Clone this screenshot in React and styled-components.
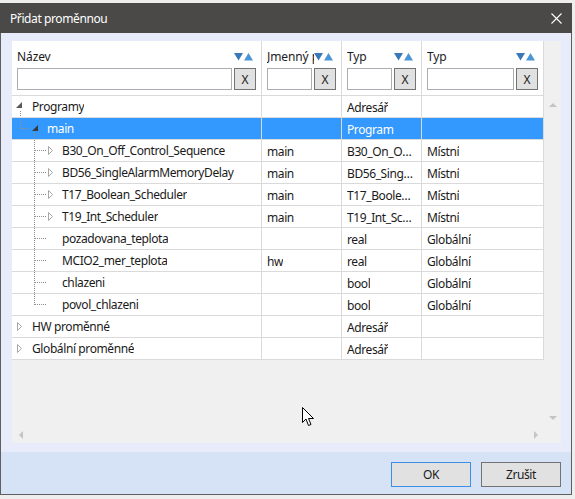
import React from 'react'
import styled, { createGlobalStyle } from 'styled-components'

const GlobalStyle = createGlobalStyle`
    html, body {
        margin: 0;
        padding: 0;
        background: #eeeeee;
    }
    body {
        font-family: 'Noto Sans', 'Open Sans', sans-serif;
        font-size: 12px;
        letter-spacing: -0.4px;
        color: #1a1a1a;
    }
`

const columns = [
    { key: 'name', title: 'Název', width: 250 },
    { key: 'ns', title: 'Jmenný prostor', width: 80 },
    { key: 'type', title: 'Typ', width: 80 },
    { key: 'scope', title: 'Typ', width: 122 },
]

const rows = [
    { name: 'Programy', level: 0, expander: 'open', type: 'Adresář' },
    { name: 'main', level: 1, expander: 'open', last: true, type: 'Program', selected: true },
    { name: 'B30_On_Off_Control_Sequence', level: 2, expander: 'closed', ns: 'main', type: 'B30_On_Off_Control_Sequence', scope: 'Místní' },
    { name: 'BD56_SingleAlarmMemoryDelay', level: 2, expander: 'closed', ns: 'main', type: 'BD56_SingleAlarmMemoryDelay', scope: 'Místní' },
    { name: 'T17_Boolean_Scheduler', level: 2, expander: 'closed', ns: 'main', type: 'T17_Boolean_Scheduler', scope: 'Místní' },
    { name: 'T19_Int_Scheduler', level: 2, expander: 'closed', ns: 'main', type: 'T19_Int_Scheduler', scope: 'Místní' },
    { name: 'pozadovana_teplota', level: 2, type: 'real', scope: 'Globální' },
    { name: 'MCIO2_mer_teplota', level: 2, ns: 'hw', type: 'real', scope: 'Globální' },
    { name: 'chlazeni', level: 2, type: 'bool', scope: 'Globální' },
    { name: 'povol_chlazeni', level: 2, last: true, type: 'bool', scope: 'Globální' },
    { name: 'HW proměnné', level: 0, expander: 'closed', type: 'Adresář' },
    { name: 'Globální proměnné', level: 0, expander: 'closed', type: 'Adresář' },
]

// x of the dotted guide that hangs under an open expander, per level
const guideX = [8.5, 22.5]
const stubEnd = [0, 19, 34]

const TreeGutter = ({ level, expander, last, selected }) => {
    const w = 20 + level * 15
    const parentX = guideX[level - 1]
    return (
        <svg width={w} height={21} style={{ flex: 'none' }}>
            {level > 0 && (
                <g stroke="#8f8f8f" strokeDasharray="1 1" shapeRendering="crispEdges">
                    <line x1={parentX} y1={0} x2={parentX} y2={last ? 11 : 21} />
                    <line x1={parentX} y1={10.5} x2={stubEnd[level]} y2={10.5} />
                </g>
            )}
            {expander === 'open' && level === 0 && (
                <>
                    <polygon points="4,12 10,6 10,12" fill="#595959" />
                    <line x1={8.5} y1={15} x2={8.5} y2={21} stroke="#8f8f8f" strokeDasharray="1 1" />
                </>
            )}
            {expander === 'open' && level === 1 && (
                <>
                    <polygon points="20,13 26,7 26,13" fill={selected ? '#3a3a3a' : '#595959'} />
                    <line x1={22.5} y1={15} x2={22.5} y2={21} stroke="#8f8f8f" strokeDasharray="1 1" />
                </>
            )}
            {expander === 'closed' && (
                <polygon
                    points={level === 0 ? '5.5,6.5 9.5,10.5 5.5,14.5' : '36.5,6.5 40.5,10.5 36.5,14.5'}
                    fill="#ffffff"
                    stroke="#a8a8a8"
                />
            )}
        </svg>
    )
}

const SortIcon = () => (
    <svg width={19} height={8} style={{ flex: 'none' }}>
        <polygon points="0,0 9,0 4.5,7.5" fill="#3b78b8" />
        <polygon points="10,7.5 19,7.5 14.5,0" fill="#4b95d6" />
    </svg>
)

const ScrollArrow = ({ dir }) => {
    const pts = {
        up: '0,4 8,4 4,0',
        down: '0,0 8,0 4,4',
        left: '4,0 4,8 0,4',
        right: '0,0 0,8 4,4',
    }[dir]
    const vertical = dir === 'up' || dir === 'down'
    return (
        <svg width={vertical ? 8 : 4} height={vertical ? 4 : 8}>
            <polygon points={pts} fill="#c4c4c4" />
        </svg>
    )
}

const Cursor = () => (
    <CursorWrap>
        <svg width={13} height={20}>
            <path
                d="M0.5 0.5 L0.5 15.5 L4 12 L6.5 18.5 L9 17.5 L6.5 11.5 L11.5 11.5 Z"
                fill="#ffffff"
                stroke="#000000"
                strokeLinejoin="miter"
            />
        </svg>
    </CursorWrap>
)

const App = () => {
    return (
        <>
            <GlobalStyle />
            <Window>
                <TitleBar>
                    <Title>Přidat proměnnou</Title>
                    <svg width={11} height={11}>
                        <path d="M0.5 0.5 L10.5 10.5 M10.5 0.5 L0.5 10.5" stroke="#ffffff" strokeWidth={1.1} />
                    </svg>
                </TitleBar>

                <DialogBody>
                    <GridPanel>
                        <TableArea>
                            <Table>
                                {columns.map((col) => (
                                    <HeaderCell key={col.key} $width={col.width}>
                                        <LabelRow>
                                            <Label>{col.title}</Label>
                                            <SortIcon />
                                        </LabelRow>
                                        <FilterRow>
                                            <FilterInput />
                                            <ClearButton>X</ClearButton>
                                        </FilterRow>
                                    </HeaderCell>
                                ))}

                                {rows.map((row) => (
                                    <Row key={row.name} $selected={row.selected}>
                                        <TreeCell $width={columns[0].width}>
                                            <TreeGutter
                                                level={row.level}
                                                expander={row.expander}
                                                last={row.last}
                                                selected={row.selected}
                                            />
                                            <CellText>{row.name}</CellText>
                                        </TreeCell>
                                        <Cell $width={columns[1].width}>
                                            <CellText>{row.ns}</CellText>
                                        </Cell>
                                        <Cell $width={columns[2].width}>
                                            <CellText>{row.type}</CellText>
                                        </Cell>
                                        <Cell $width={columns[3].width}>
                                            <CellText>{row.scope}</CellText>
                                        </Cell>
                                    </Row>
                                ))}
                            </Table>
                            <Cursor />
                        </TableArea>

                        <VScroll>
                            <ScrollButton>
                                <ScrollArrow dir="up" />
                            </ScrollButton>
                            <ScrollButton>
                                <ScrollArrow dir="down" />
                            </ScrollButton>
                        </VScroll>

                        <HScroll>
                            <ScrollButton>
                                <ScrollArrow dir="left" />
                            </ScrollButton>
                            <ScrollButton>
                                <ScrollArrow dir="right" />
                            </ScrollButton>
                        </HScroll>
                        <Corner />
                    </GridPanel>
                </DialogBody>

                <Footer>
                    <DialogButton $primary>OK</DialogButton>
                    <DialogButton>Zrušit</DialogButton>
                </Footer>
            </Window>
        </>
    )
}

export default App

const Window = styled.div`
    margin-top: 3px;
    width: 572px;
    box-sizing: border-box;
    border: 1px solid #5f5f5f;
    border-top: none;
    background: #e8ecfa;
`

const TitleBar = styled.div`
    height: 30px;
    margin: 0 -1px;
    padding: 0 10px 0 10px;
    background: #4a4947;
    display: flex;
    align-items: center;
    justify-content: space-between;
    color: #ffffff;
`

const Title = styled.span`
    font-size: 12px;
    color: #ffffff;
`

const DialogBody = styled.div`
    padding: 8px 10px 9px 11px;
`

const GridPanel = styled.div`
    height: 402px;
    background: #f0f0f0;
    display: grid;
    grid-template-columns: 532px 17px;
    grid-template-rows: 1fr 17px;
`

const TableArea = styled.div`
    position: relative;
    overflow: hidden;
`

const Table = styled.div`
    display: grid;
    grid-template-columns: 250px 80px 80px 122px;
    background: #ffffff;
`

const HeaderCell = styled.div`
    box-sizing: border-box;
    width: ${(p) => p.$width}px;
    height: 55px;
    padding: 8px 5px 0 5px;
    border-right: 1px solid #dadada;
    border-bottom: 1px solid #dadada;
    display: flex;
    flex-direction: column;
    gap: 3px;
`

const LabelRow = styled.div`
    height: 16px;
    display: flex;
    align-items: center;
    padding-right: 3px;
`

const Label = styled.span`
    flex: 1;
    min-width: 0;
    overflow: hidden;
    white-space: nowrap;
    line-height: 16px;
    letter-spacing: -0.1px;
    padding-right: 2px;
`

const FilterRow = styled.div`
    display: flex;
    gap: 2px;
    height: 22px;
`

const FilterInput = styled.div`
    flex: 1;
    box-sizing: border-box;
    background: #ffffff;
    border: 1px solid #abadb3;
`

const ClearButton = styled.div`
    flex: none;
    box-sizing: border-box;
    width: 22px;
    height: 22px;
    background: #e1e1e1;
    border: 1px solid #737373;
    display: flex;
    align-items: center;
    justify-content: center;
    font-size: 12px;
    letter-spacing: 0;
    color: #1a1a1a;
`

const Row = styled.div`
    display: contents;
    color: ${(p) => (p.$selected ? '#ffffff' : '#1a1a1a')};

    & > div {
        background: ${(p) => (p.$selected ? '#3399ff' : '#ffffff')};
    }
`

const Cell = styled.div`
    box-sizing: border-box;
    width: ${(p) => p.$width}px;
    height: 22px;
    padding: 1px 6px 0 5px;
    border-right: 1px solid #dadada;
    border-bottom: 1px solid #dadada;
    display: flex;
    align-items: center;
    min-width: 0;
`

const TreeCell = styled(Cell)`
    padding: 0;
`

const CellText = styled.span`
    min-width: 0;
    overflow: hidden;
    white-space: nowrap;
    text-overflow: ellipsis;
    line-height: 21px;
`

const VScroll = styled.div`
    margin-top: 55px;
    display: flex;
    flex-direction: column;
    justify-content: space-between;
`

const HScroll = styled.div`
    display: flex;
    justify-content: space-between;
`

const Corner = styled.div``

const ScrollButton = styled.div`
    width: 17px;
    height: 17px;
    display: flex;
    align-items: center;
    justify-content: center;
`

const CursorWrap = styled.div`
    position: absolute;
    left: 290px;
    top: 366px;
    line-height: 0;
`

const Footer = styled.div`
    height: 42px;
    box-sizing: border-box;
    padding: 10px 10px 0 0;
    background: #d6e2f6;
    display: flex;
    justify-content: flex-end;
    align-items: flex-start;
    gap: 10px;
`

const DialogButton = styled.div`
    box-sizing: border-box;
    width: 80px;
    height: 25px;
    background: #e1e1e1;
    border: 1px solid ${(p) => (p.$primary ? '#3c8fe3' : '#737373')};
    display: flex;
    align-items: center;
    justify-content: center;
    font-size: 12px;
    color: #1a1a1a;
`
